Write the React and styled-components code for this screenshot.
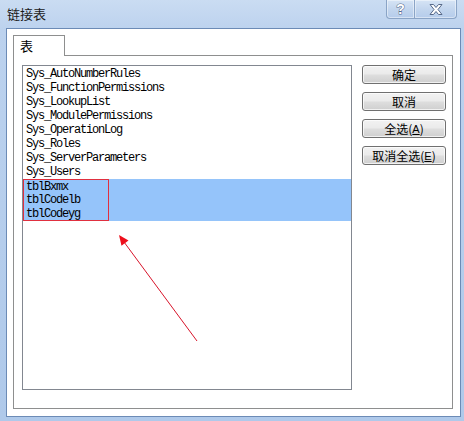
import React from 'react';
import styled, { createGlobalStyle } from 'styled-components';

const GlobalStyle = createGlobalStyle`
  html, body {
    margin: 0;
    padding: 0;
    background: #ffffff;
  }
  * {
    box-sizing: border-box;
  }
`;

const Window = styled.div`
  position: relative;
  width: 464px;
  height: 421px;
  display: flex;
  flex-direction: column;
  background: linear-gradient(180deg, #cadcf2 0%, #bcd2ee 30px, #afc9ea 100%);
  font-family: "Noto Sans CJK SC", "Liberation Sans", sans-serif;
  overflow: hidden;
`;

const TitleBar = styled.div`
  height: 28px;
  display: flex;
  align-items: flex-start;
  justify-content: space-between;
  padding-left: 7px;
  padding-right: 7px;
`;

const Title = styled.span`
  margin-top: 4px;
  font-size: 13px;
  line-height: 19px;
  color: #1a1a1a;
`;

const Caption = styled.div`
  display: flex;
`;

const CaptionButton = styled.div`
  width: ${p => p.$w}px;
  height: 19px;
  display: flex;
  align-items: center;
  justify-content: center;
  border: 1px solid #8aa4c6;
  border-top: none;
  border-left-width: ${p => (p.$first ? 1 : 0)}px;
  border-radius: ${p => (p.$first ? '0 0 0 4px' : '0 0 4px 0')};
  background: linear-gradient(180deg, #d6e4f5 0%, #c3d6ee 50%, #b5cceb 100%);
  box-shadow: inset 0 0 0 1px rgba(255, 255, 255, 0.45);
`;

const HelpGlyph = styled.span`
  font-family: "Liberation Sans", sans-serif;
  font-weight: bold;
  font-size: 14px;
  line-height: 14px;
  color: #ffffff;
  -webkit-text-stroke: 1px #56698a;
  paint-order: stroke fill;
`;

const Body = styled.div`
  flex: 1;
  margin: 0 3px 4px 6px;
  border: 1px solid #6c8bb6;
  background: #ffffff;
  display: flex;
  flex-direction: column;
  padding: 6px 7px 7px 6px;
`;

const TabStrip = styled.div`
  display: flex;
  height: 20px;
`;

const Tab = styled.div`
  position: relative;
  z-index: 1;
  width: 52px;
  height: 21px;
  border: 1px solid #8e8f8f;
  border-bottom: none;
  background: #ffffff;
  font-size: 13px;
  line-height: 18px;
  padding-left: 6px;
  padding-top: 1px;
  color: #000;
`;

const Panel = styled.div`
  flex: 1;
  border: 1px solid #8e8f8f;
  display: grid;
  grid-template-columns: 330px 84px;
  column-gap: 10px;
  padding: 9px 6px 18px 8px;
`;

const ListBox = styled.div`
  border: 1px solid #828790;
  background: #ffffff;
  padding: 1px 0;
  font-family: "Liberation Mono", "DejaVu Sans Mono", monospace;
  font-size: 12px;
  letter-spacing: -1.2px;
  color: #000;
`;

const Row = styled.div`
  height: 14px;
  line-height: 14px;
  padding-left: 3px;
  white-space: nowrap;
`;

const Selection = styled.div`
  background: #95c4fa;
`;

const Marker = styled.div`
  width: 86px;
  border: 1px solid #e0303f;
  margin-left: 0;

  & > div {
    height: ${p => 14}px;
    padding-left: 2px;
  }
  & > div:first-child {
    height: 13px;
  }
  & > div:last-child {
    height: 13px;
  }
`;

const ButtonColumn = styled.div`
  display: flex;
  flex-direction: column;
  gap: 8px;
`;

const PushButton = styled.div`
  height: 19px;
  border: 1px solid #707070;
  border-radius: 3px;
  background: linear-gradient(180deg, #f2f2f2 0%, #ebebeb 45%, #dddddd 55%, #cfcfcf 100%);
  box-shadow: inset 0 0 0 1px rgba(255, 255, 255, 0.7);
  display: flex;
  align-items: center;
  justify-content: center;
  font-size: 12px;
  line-height: 14px;
  color: #000;
`;

const Key = styled.span`
  font-family: "Liberation Sans", sans-serif;
  font-size: 11px;
  text-decoration: underline;
`;

const Annotation = styled.svg`
  position: absolute;
  left: 0;
  top: 0;
  pointer-events: none;
`;

const tables = [
  'Sys_AutoNumberRules',
  'Sys_FunctionPermissions',
  'Sys_LookupList',
  'Sys_ModulePermissions',
  'Sys_OperationLog',
  'Sys_Roles',
  'Sys_ServerParameters',
  'Sys_Users',
];

const picked = ['tblBxmx', 'tblCodelb', 'tblCodeyg'];

export default function App() {
  return (
    <>
      <GlobalStyle />
      <Window>
        <TitleBar>
          <Title>链接表</Title>
          <Caption>
            <CaptionButton $w={29} $first>
              <HelpGlyph>?</HelpGlyph>
            </CaptionButton>
            <CaptionButton $w={42}>
              <svg width="16" height="13" viewBox="0 0 16 13">
                <path
                  d="M2 1.5 L5.5 1.5 L8 4.5 L10.5 1.5 L14 1.5 L10 6.5 L14 11.5 L10.5 11.5 L8 8.5 L5.5 11.5 L2 11.5 L6 6.5 Z"
                  fill="#ffffff"
                  stroke="#56698a"
                  strokeWidth="1"
                  strokeLinejoin="round"
                />
              </svg>
            </CaptionButton>
          </Caption>
        </TitleBar>

        <Body>
          <TabStrip>
            <Tab>表</Tab>
          </TabStrip>
          <Panel>
            <ListBox>
              {tables.map(t => (
                <Row key={t}>{t}</Row>
              ))}
              <Selection>
                <Marker>
                  {picked.map(t => (
                    <Row key={t}>{t}</Row>
                  ))}
                </Marker>
              </Selection>
            </ListBox>
            <ButtonColumn>
              <PushButton>确定</PushButton>
              <PushButton>取消</PushButton>
              <PushButton>
                全选(<Key>A</Key>)
              </PushButton>
              <PushButton>
                取消全选(<Key>E</Key>)
              </PushButton>
            </ButtonColumn>
          </Panel>
        </Body>

        <Annotation width="464" height="421">
          <line x1="197" y1="341" x2="124" y2="242" stroke="#d8142a" strokeWidth="1" />
          <polygon points="119,235 128.5,240.5 121.5,245.8" fill="#ee0f1c" />
        </Annotation>
      </Window>
    </>
  );
}
